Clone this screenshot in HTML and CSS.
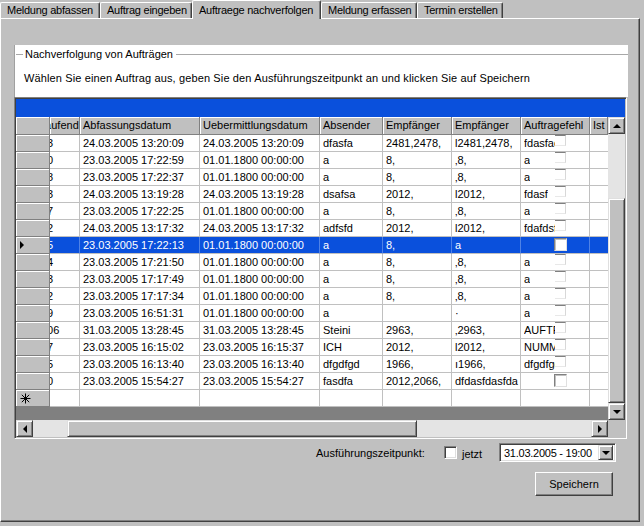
FILE: index.html
```html
<!DOCTYPE html>
<html>
<head>
<meta charset="utf-8">
<link rel="stylesheet" href="styles.css">
</head>
<body>
<div class="tabs">
  <div class="tab t1">Meldung abfassen</div>
  <div class="tab t2">Auftrag eingeben</div>
  <div class="tab active">Auftraege nachverfolgen</div>
  <div class="tab t4">Meldung erfassen</div>
  <div class="tab t5">Termin erstellen</div>
</div>
<div class="page">
  <div class="info">
    <div class="legend"><span class="lline lshort"></span><span class="ltext">Nachverfolgung von Aufträgen</span><span class="lline llong"></span></div>
    <div class="hint">Wählen Sie einen Auftrag aus, geben Sie den Ausführungszeitpunkt an und klicken Sie auf Speichern</div>
  </div>
  <div class="grid">
    <div class="caption"></div>
    <div class="main">
      <div class="row head">
        <div class="rh"></div>
        <div class="c c1"><span class="shift">Laufend</span></div>
        <div class="c c2">Abfassungsdatum</div>
        <div class="c c3">Uebermittlungsdatum</div>
        <div class="c c4">Absender</div>
        <div class="c c5">Empfänger</div>
        <div class="c c6">Empfänger</div>
        <div class="c c7">Auftragefehl</div>
        <div class="c c8">Ist</div>
      </div>
      <div class="row"><div class="rh"></div><div class="c c1"><span class="num">23</span></div><div class="c c2">24.03.2005 13:20:09</div><div class="c c3">24.03.2005 13:20:09</div><div class="c c4">dfasfa</div><div class="c c5">2481,2478,</div><div class="c c6">l2481,2478,</div><div class="c c7"><span class="ct">fdasfac</span><span class="cb"></span></div><div class="c c8"></div></div>
      <div class="row"><div class="rh"></div><div class="c c1"><span class="num">20</span></div><div class="c c2">23.03.2005 17:22:59</div><div class="c c3">01.01.1800 00:00:00</div><div class="c c4">a</div><div class="c c5">8,</div><div class="c c6">‚8,</div><div class="c c7"><span class="ct">a</span><span class="cb"></span></div><div class="c c8"></div></div>
      <div class="row"><div class="rh"></div><div class="c c1"><span class="num">18</span></div><div class="c c2">23.03.2005 17:22:37</div><div class="c c3">01.01.1800 00:00:00</div><div class="c c4">a</div><div class="c c5">8,</div><div class="c c6">‚8,</div><div class="c c7"><span class="ct">a</span><span class="cb"></span></div><div class="c c8"></div></div>
      <div class="row"><div class="rh"></div><div class="c c1"><span class="num">13</span></div><div class="c c2">24.03.2005 13:19:28</div><div class="c c3">24.03.2005 13:19:28</div><div class="c c4">dsafsa</div><div class="c c5">2012,</div><div class="c c6">l2012,</div><div class="c c7"><span class="ct">fdasf</span><span class="cb"></span></div><div class="c c8"></div></div>
      <div class="row"><div class="rh"></div><div class="c c1"><span class="num">17</span></div><div class="c c2">23.03.2005 17:22:25</div><div class="c c3">01.01.1800 00:00:00</div><div class="c c4">a</div><div class="c c5">8,</div><div class="c c6">‚8,</div><div class="c c7"><span class="ct">a</span><span class="cb"></span></div><div class="c c8"></div></div>
      <div class="row"><div class="rh"></div><div class="c c1"><span class="num">12</span></div><div class="c c2">24.03.2005 13:17:32</div><div class="c c3">24.03.2005 13:17:32</div><div class="c c4">adfsfd</div><div class="c c5">2012,</div><div class="c c6">l2012,</div><div class="c c7"><span class="ct">fdafdsf</span><span class="cb"></span></div><div class="c c8"></div></div>
      <div class="row sel"><div class="rh"><span class="cur"></span></div><div class="c c1"><span class="num">15</span></div><div class="c c2">23.03.2005 17:22:13</div><div class="c c3">01.01.1800 00:00:00</div><div class="c c4">a</div><div class="c c5">8,</div><div class="c c6">a</div><div class="c c7"><span class="cb full"></span></div><div class="c c8"></div></div>
      <div class="row"><div class="rh"></div><div class="c c1"><span class="num">14</span></div><div class="c c2">23.03.2005 17:21:50</div><div class="c c3">01.01.1800 00:00:00</div><div class="c c4">a</div><div class="c c5">8,</div><div class="c c6">‚8,</div><div class="c c7"><span class="ct">a</span><span class="cb"></span></div><div class="c c8"></div></div>
      <div class="row"><div class="rh"></div><div class="c c1"><span class="num">13</span></div><div class="c c2">23.03.2005 17:17:49</div><div class="c c3">01.01.1800 00:00:00</div><div class="c c4">a</div><div class="c c5">8,</div><div class="c c6">‚8,</div><div class="c c7"><span class="ct">a</span><span class="cb"></span></div><div class="c c8"></div></div>
      <div class="row"><div class="rh"></div><div class="c c1"><span class="num">12</span></div><div class="c c2">23.03.2005 17:17:34</div><div class="c c3">01.01.1800 00:00:00</div><div class="c c4">a</div><div class="c c5">8,</div><div class="c c6">‚8,</div><div class="c c7"><span class="ct">a</span><span class="cb"></span></div><div class="c c8"></div></div>
      <div class="row"><div class="rh"></div><div class="c c1"><span class="num">19</span></div><div class="c c2">23.03.2005 16:51:31</div><div class="c c3">01.01.1800 00:00:00</div><div class="c c4">a</div><div class="c c5"></div><div class="c c6">·</div><div class="c c7"><span class="ct">a</span><span class="cb"></span></div><div class="c c8"></div></div>
      <div class="row"><div class="rh"></div><div class="c c1"><span class="num">106</span></div><div class="c c2">31.03.2005 13:28:45</div><div class="c c3">31.03.2005 13:28:45</div><div class="c c4">Steini</div><div class="c c5">2963,</div><div class="c c6">‚2963,</div><div class="c c7"><span class="ct">AUFTF</span><span class="cb"></span></div><div class="c c8"></div></div>
      <div class="row"><div class="rh"></div><div class="c c1"><span class="num">17</span></div><div class="c c2">23.03.2005 16:15:02</div><div class="c c3">23.03.2005 16:15:37</div><div class="c c4">ICH</div><div class="c c5">2012,</div><div class="c c6">l2012,</div><div class="c c7"><span class="ct">NUMM</span><span class="cb"></span></div><div class="c c8"></div></div>
      <div class="row"><div class="rh"></div><div class="c c1"><span class="num">15</span></div><div class="c c2">23.03.2005 16:13:40</div><div class="c c3">23.03.2005 16:13:40</div><div class="c c4">dfgdfgd</div><div class="c c5">1966,</div><div class="c c6">ı1966,</div><div class="c c7"><span class="ct">dfgdfgd</span><span class="cb"></span></div><div class="c c8"></div></div>
      <div class="row"><div class="rh"></div><div class="c c1"><span class="num">10</span></div><div class="c c2">23.03.2005 15:54:27</div><div class="c c3">23.03.2005 15:54:27</div><div class="c c4">fasdfa</div><div class="c c5">2012,2066,</div><div class="c c6">dfdasfdasfda</div><div class="c c7"><span class="cb full"></span></div><div class="c c8"></div></div>
      <div class="row newrow"><div class="rh"><svg class="star" width="11" height="11" viewBox="0 0 11 11"><path d="M5.5 0.5V10.5M0.5 5.5H10.5M1.8 1.8L9.2 9.2M9.2 1.8L1.8 9.2" stroke="#000" stroke-width="1" fill="none"/></svg></div><div class="c c1"></div><div class="c c2"></div><div class="c c3"></div><div class="c c4"></div><div class="c c5"></div><div class="c c6"></div><div class="c c7"></div><div class="c c8"></div></div>
    </div>
    <div class="vscroll">
      <div class="sbtn"><span class="arr up"></span></div>
      <div class="strack vtrack1"></div>
      <div class="sthumb vthumb"></div>
      <div class="sbtn"><span class="arr down"></span></div>
    </div>
    <div class="hscroll">
      <div class="sbtn"><span class="arr left"></span></div>
      <div class="strack htrack1"></div>
      <div class="sthumb hthumb"></div>
      <div class="strack htrack2"></div>
      <div class="sbtn"><span class="arr right"></span></div>
    </div>
    <div class="corner"></div>
  </div>
  <div class="controls">
    <span class="lbl">Ausführungszeitpunkt:</span>
    <span class="chk"></span>
    <span class="jetzt">jetzt</span>
    <div class="combo"><span class="ctext">31.03.2005 - 19:00</span><span class="cbtn"><span class="arr down"></span></span></div>
  </div>
  <div class="actions"><div class="btn">Speichern</div></div>
</div>
</body>
</html>
```

FILE: styles.css
```css
* { box-sizing: border-box; }
html, body { margin: 0; padding: 0; }
body {
  width: 644px;
  height: 526px;
  background: #c0c0c0;
  font-family: "Liberation Sans", Arial, sans-serif;
  font-size: 11px;
  color: #000;
  overflow: hidden;
}

/* Tabs */
.tabs {
  display: flex;
  align-items: flex-end;
  height: 18px;
  position: relative;
  z-index: 2;
}
.tab {
  height: 16px;
  line-height: 14px;
  padding: 0 0 0 6px;
  border-top: 1px solid #fff;
  border-left: 1px solid #fff;
  border-right: 1px solid #404040;
  box-shadow: inset -1px 0 0 #808080;
  border-radius: 2px 2px 0 0;
  white-space: nowrap;
  letter-spacing: -0.25px;
  background: #c0c0c0;
  overflow: hidden;
}
.t1 { width: 100px; }
.t2 { width: 92px; }
.t4 { width: 96px; }
.t5 { width: 86px; }
.tab.active {
  width: 129px;
  height: 19px;
  margin-bottom: -1px;
  padding-top: 2px;
  border-right: 1px solid #404040;
}

/* Page */
.page {
  width: 640px;
  height: 504px;
  border-top: 1px solid #fff;
  border-left: 1px solid #fff;
  border-right: 1px solid #404040;
  border-bottom: 1px solid #404040;
  box-shadow: inset -1px -1px 0 #808080;
  padding: 26px 11px 0 13px;
}

/* Info box */
.info {
  height: 52px;
  background: #fff;
  border-left: 1px solid #a0a0a0;
  padding: 2px 0 0 1px;
}
.legend {
  display: flex;
  align-items: center;
  height: 14px;
}
.lline { height: 1px; background: #a8a8a8; }
.lshort { width: 7px; }
.llong { flex: 1; margin-left: 3px; }
.ltext { padding-left: 2px; }
.hint {
  margin-top: 11px;
  padding-left: 8px;
  white-space: nowrap;
  letter-spacing: 0.13px;
}

/* Grid */
.grid {
  display: grid;
  grid-template-columns: 592px 17px;
  grid-template-rows: 18px 303px 17px;
  width: 613px;
  border-style: solid;
  border-width: 1px;
  border-color: #808080 #fff #fff #808080;
  box-shadow: inset 1px 1px 0 #404040, inset -1px -1px 0 #c0c0c0;
  padding: 1px;
}
.caption {
  grid-column: 1 / 3;
  background: #0a50dc;
}
.main {
  background: #808080;
  overflow: hidden;
}
.row {
  display: flex;
  height: 17px;
}
.row.head { height: 18px; }
.rh {
  flex: none;
  width: 34px;
  background: #c0c0c0;
  border-right: 1px solid #808080;
  border-bottom: 1px solid #808080;
  box-shadow: inset 1px 1px 0 #fff;
  display: flex;
  align-items: center;
  padding-left: 4px;
}
.c {
  flex: none;
  background: #fff;
  border-right: 1px solid #c0c0c0;
  border-bottom: 1px solid #c0c0c0;
  line-height: 16px;
  padding-left: 3px;
  white-space: nowrap;
  overflow: hidden;
  position: relative;
}
.c1 { width: 30px; padding-left: 0; }
.c2 { width: 120px; }
.c3 { width: 120px; }
.c4 { width: 63px; }
.c5 { width: 69px; }
.c6 { width: 69px; }
.c7 { width: 69px; }
.c8 { width: 18px; border-right: none; }
.num { margin-left: -9px; }
.shift { margin-left: -11px; }

.head .c {
  background: #c0c0c0;
  border-right: 1px solid #808080;
  border-bottom: 1px solid #808080;
  box-shadow: inset 1px 1px 0 #fff;
  line-height: 17px;
}
.head .c1 { padding-left: 0; }

.sel .c {
  background: #0a50dc;
  color: #fff;
  border-right-color: #4f82e6;
  border-bottom-color: #c0c0c0;
}
.cur {
  width: 0; height: 0;
  border-top: 4px solid transparent;
  border-bottom: 4px solid transparent;
  border-left: 4px solid #000;
}
.star { display: block; margin-left: 0; }

.ct { display: inline-block; max-width: 31px; overflow: hidden; vertical-align: top; }
.cb {
  position: absolute;
  left: 34px;
  top: 0;
  width: 11px;
  height: 11px;
  border-top: 1px solid #808080;
  border-right: 1px solid #d8d8d8;
  border-bottom: 1px solid #e8e8e8;
}
.cb.full {
  left: 33px;
  top: 1px;
  width: 13px;
  height: 13px;
  background: #fff;
  border: 1px solid;
  border-color: #808080 #e0e0e0 #e0e0e0 #808080;
  box-shadow: inset 1px 1px 0 #c0c0c0;
}

/* Scrollbars */
.vscroll { display: flex; flex-direction: column; }
.hscroll { display: flex; }
.sbtn {
  flex: none;
  width: 17px;
  height: 17px;
  background: #c0c0c0;
  border-style: solid;
  border-width: 1px;
  border-color: #dfdfdf #404040 #404040 #dfdfdf;
  box-shadow: inset 1px 1px 0 #fff, inset -1px -1px 0 #808080;
  display: flex;
  align-items: center;
  justify-content: center;
}
.strack { background: #e4e4e4; }
.sthumb {
  background: #c0c0c0;
  border-style: solid;
  border-width: 1px;
  border-color: #dfdfdf #404040 #404040 #dfdfdf;
  box-shadow: inset 1px 1px 0 #fff, inset -1px -1px 0 #808080;
}
.vtrack1 { height: 64px; }
.vthumb { flex: 1; }
.htrack1 { width: 34px; }
.hthumb { width: 350px; }
.htrack2 { flex: 1; }
.corner { background: #c0c0c0; }

.arr { width: 0; height: 0; }
.arr.up { border-left: 4px solid transparent; border-right: 4px solid transparent; border-bottom: 4px solid #000; }
.arr.down { border-left: 4px solid transparent; border-right: 4px solid transparent; border-top: 4px solid #000; }
.arr.left { border-top: 4px solid transparent; border-bottom: 4px solid transparent; border-right: 4px solid #000; }
.arr.right { border-top: 4px solid transparent; border-bottom: 4px solid transparent; border-left: 4px solid #000; }

/* Controls */
.controls {
  display: flex;
  align-items: center;
  height: 19px;
  margin-top: 4px;
  padding-left: 302px;
}
.lbl { width: 128px; white-space: nowrap; }
.chk {
  width: 13px;
  height: 13px;
  background: #fff;
  border: 1px solid;
  border-color: #808080 #fff #fff #808080;
  box-shadow: inset 1px 1px 0 #404040, inset -1px -1px 0 #dfdfdf;
}
.jetzt { width: 42px; padding-left: 5px; margin-top: 3px; }
.combo {
  width: 117px;
  height: 19px;
  display: flex;
  align-items: center;
  background: #fff;
  border: 1px solid;
  border-color: #808080 #fff #fff #808080;
  box-shadow: inset 1px 1px 0 #404040, inset -1px -1px 0 #dfdfdf;
  padding: 2px 2px 2px 4px;
}
.ctext { flex: 1; white-space: nowrap; letter-spacing: -0.25px; }
.cbtn {
  width: 15px;
  height: 15px;
  background: #c0c0c0;
  border-style: solid;
  border-width: 1px;
  border-color: #dfdfdf #404040 #404040 #dfdfdf;
  box-shadow: inset 1px 1px 0 #fff, inset -1px -1px 0 #808080;
  display: flex;
  align-items: center;
  justify-content: center;
}
.actions {
  display: flex;
  justify-content: flex-end;
  margin-top: 10px;
  padding-right: 15px;
}
.btn {
  width: 78px;
  height: 24px;
  line-height: 22px;
  text-align: center;
  font-size: 11px;
  background: #c0c0c0;
  border-style: solid;
  border-width: 1px;
  border-color: #fff #404040 #404040 #fff;
  box-shadow: inset -1px -1px 0 #808080;
}
```
